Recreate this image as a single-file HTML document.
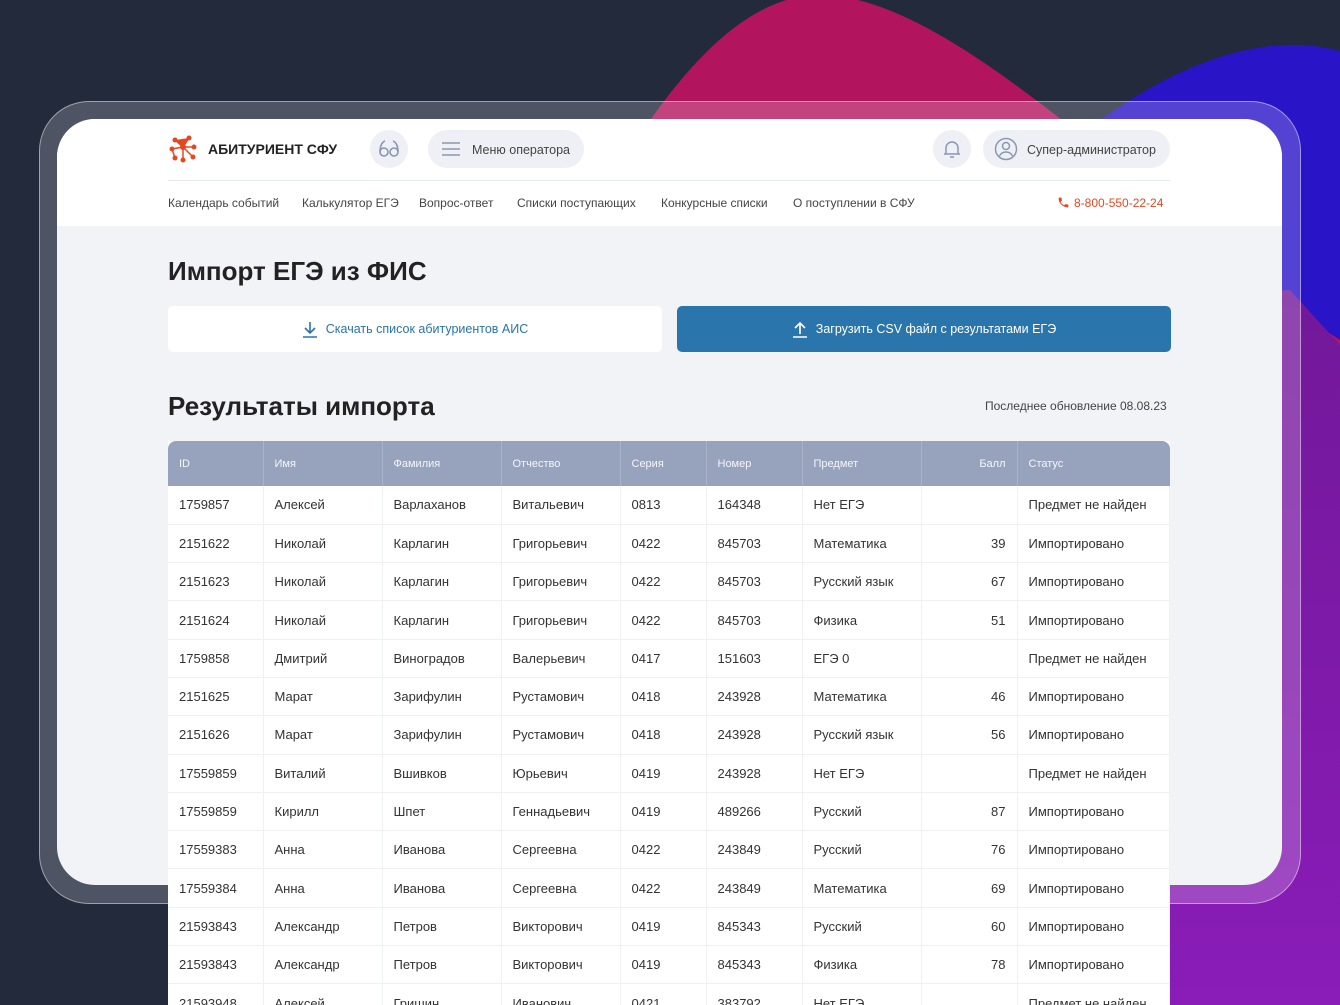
<!DOCTYPE html>
<html style="width:1340px;height:1005px;overflow:hidden"><head><meta charset="utf-8">
<style>
*{margin:0;padding:0;box-sizing:border-box}
body{width:1340px;height:1005px;overflow:hidden;position:relative;background:#222a3c;font-family:"Liberation Sans","Noto Sans CJK SC",sans-serif;color:#333}
.bg{position:absolute;left:0;top:0}
.frame{position:absolute;left:39px;top:101px;width:1262px;height:803px;border-radius:50px;background:rgba(255,255,255,0.2);border:1px solid rgba(255,255,255,0.45)}
.card{position:absolute;left:57px;top:119px;width:1225px;height:766px;border-radius:38px;background:#f2f3f7;overflow:hidden}
.hdr{position:absolute;left:0;top:0;width:1225px;height:107px;background:#fff}
.abs{position:absolute}
.pill{position:absolute;background:#eef0f5;border-radius:20px;height:38px}
.nav{position:absolute;top:77px;font-size:12px;color:#444;white-space:nowrap}
h1{position:absolute;font-size:26px;font-weight:bold;color:#222;white-space:nowrap}
.btn{position:absolute;top:187px;height:46px;width:494px;border-radius:5px;font-size:12.5px;display:flex;align-items:center;justify-content:center;gap:8px}
.wrap{position:absolute;left:168px;top:441px;width:1002px;height:564px;overflow:hidden}
table{width:1002px;border-collapse:collapse;background:#fff;font-size:13px;color:#333}
th{background:#97a3bc;color:#f4f6fa;font-weight:normal;font-size:11px;height:45px;text-align:left;padding-left:11px;border-right:1px solid #a9b3c8}
td{height:38.3px;padding-left:11px;border-bottom:1px solid #eef0f4;border-right:1px solid #eef0f4;white-space:nowrap}
td.r,th.r{text-align:right;padding-right:11px;padding-left:0}
</style></head><body>
<svg class="bg" width="1340" height="1005">
<defs><linearGradient id="pg" x1="0" y1="0" x2="0" y2="1"><stop offset="0" stop-color="#72189a"/><stop offset="1" stop-color="#8a1cb8"/></linearGradient></defs>
<path d="M600 200 C680 60 750 -5 820 -5 C900 -5 1000 70 1100 150 L1340 330 L1340 1005 L1100 1005 Z" fill="#b3145e"/>
<path d="M1050 160 C1130 90 1220 42 1300 45 C1320 46 1340 50 1340 52 L1340 340 L1200 250 Z" fill="#2a14c8"/>
<path d="M1150 300 L1290 290 L1340 345 L1340 1005 L1150 1005 Z" fill="url(#pg)"/>
</svg>
<div class="frame"></div>
<div class="card">
 <div class="hdr">
  <svg class="abs" style="left:112px;top:16px" width="28" height="28" viewBox="0 0 28 28" fill="#e8461e"><circle cx="6" cy="5" r="2.5"/><circle cx="20" cy="3" r="2.5"/><circle cx="25" cy="12" r="2.5"/><circle cx="14" cy="12" r="3"/><circle cx="3" cy="14" r="2.5"/><circle cx="6" cy="23" r="2.5"/><circle cx="14" cy="25" r="2.5"/><circle cx="24" cy="22" r="2.5"/><path d="M6 5L14 12L20 3M14 12L25 12M14 12L3 14M14 12L14 25M14 12L24 22M6 23L3 14" stroke="#e8461e" stroke-width="1.5"/></svg>
  <div class="abs" style="left:151px;top:22px;font-size:14px;font-weight:bold;color:#222">АБИТУРИЕНТ СФУ</div>
  <div class="pill" style="left:313px;top:11px;width:38px"></div>
  <svg class="abs" style="left:321px;top:20px" width="22" height="20" viewBox="0 0 22 20" fill="none" stroke="#8b97b0" stroke-width="1.6"><circle cx="6" cy="13" r="4"/><circle cx="16" cy="13" r="4"/><path d="M2 13C2 7 4 3 7 2M20 13C20 7 18 3 15 2"/></svg>
  <div class="pill" style="left:371px;top:11px;width:156px"></div>
  <svg class="abs" style="left:385px;top:22px" width="18" height="16" stroke="#8b97b0" stroke-width="1.6"><path d="M0 2H18M0 8H18M0 14H18"/></svg>
  <div class="abs" style="left:415px;top:24px;font-size:12.5px;color:#444">Меню оператора</div>
  <div class="pill" style="left:876px;top:11px;width:38px"></div>
  <svg class="abs" style="left:886px;top:20px" width="18" height="20" fill="none" stroke="#8b97b0" stroke-width="1.5"><path d="M3 15V9a6 6 0 0112 0v6M1 15H17M7 18H11"/></svg>
  <div class="pill" style="left:926px;top:11px;width:187px"></div>
  <svg class="abs" style="left:937px;top:18px" width="24" height="24" fill="none" stroke="#8b97b0" stroke-width="1.5"><circle cx="12" cy="12" r="10.5"/><circle cx="12" cy="9" r="3.5"/><path d="M5.5 19c1.5-3 4-4 6.5-4s5 1 6.5 4"/></svg>
  <div class="abs" style="left:970px;top:24px;font-size:12.5px;color:#444">Супер-администратор</div>
  <div class="abs" style="left:111px;top:61px;width:1002px;height:1px;background:#e6e9ef"></div>
  <div class="nav" style="left:111px">Календарь событий</div>
  <div class="nav" style="left:245px">Калькулятор ЕГЭ</div>
  <div class="nav" style="left:362px">Вопрос-ответ</div>
  <div class="nav" style="left:460px">Списки поступающих</div>
  <div class="nav" style="left:604px">Конкурсные списки</div>
  <div class="nav" style="left:736px">О поступлении в СФУ</div>
  <svg class="abs" style="left:1000px;top:77px" width="13" height="13" viewBox="0 0 24 24" fill="#e8461e"><path d="M6.6 10.8c1.4 2.8 3.8 5.1 6.6 6.6l2.2-2.2c.3-.3.7-.4 1-.2 1.1.4 2.3.6 3.6.6.6 0 1 .4 1 1V20c0 .6-.4 1-1 1C10.6 21 3 13.4 3 4c0-.6.4-1 1-1h3.5c.6 0 1 .4 1 1 0 1.3.2 2.5.6 3.6.1.3 0 .7-.2 1z"/></svg>
  <div class="nav" style="left:1017px;color:#e8461e">8-800-550-22-24</div>
 </div>
 <h1 style="left:111px;top:137px">Импорт ЕГЭ из ФИС</h1>
 <div class="btn" style="left:111px;background:#fff;color:#2a73ad">
  <svg width="16" height="17" fill="none" stroke="#2a73ad" stroke-width="1.6"><path d="M8 1V12M3 7L8 12L13 7M1 16H15"/></svg>Скачать список абитуриентов АИС</div>
 <div class="btn" style="left:620px;background:#2a75ac;color:#fff">
  <svg width="16" height="17" fill="none" stroke="#fff" stroke-width="1.6"><path d="M8 13V2M3 7L8 2L13 7M1 16H15"/></svg>Загрузить CSV файл с результатами ЕГЭ</div>
 <h1 style="left:111px;top:272px">Результаты импорта</h1>
 <div class="abs" style="left:928px;top:280px;font-size:12px;color:#444">Последнее обновление 08.08.23</div>
</div>
<div class="wrap">
<table>
<tr><th style="width:95px;border-top-left-radius:8px">ID</th><th style="width:119px">Имя</th><th style="width:119px">Фамилия</th><th style="width:119px">Отчество</th><th style="width:86px">Серия</th><th style="width:96px">Номер</th><th style="width:119px">Предмет</th><th class="r" style="width:96px">Балл</th><th style="border-top-right-radius:8px;border-right:none">Статус</th></tr>
<tr><td>1759857</td><td>Алексей</td><td>Варлаханов</td><td>Витальевич</td><td>0813</td><td>164348</td><td>Нет ЕГЭ</td><td class="r"></td><td>Предмет не найден</td></tr>
<tr><td>2151622</td><td>Николай</td><td>Карлагин</td><td>Григорьевич</td><td>0422</td><td>845703</td><td>Математика</td><td class="r">39</td><td>Импортировано</td></tr>
<tr><td>2151623</td><td>Николай</td><td>Карлагин</td><td>Григорьевич</td><td>0422</td><td>845703</td><td>Русский язык</td><td class="r">67</td><td>Импортировано</td></tr>
<tr><td>2151624</td><td>Николай</td><td>Карлагин</td><td>Григорьевич</td><td>0422</td><td>845703</td><td>Физика</td><td class="r">51</td><td>Импортировано</td></tr>
<tr><td>1759858</td><td>Дмитрий</td><td>Виноградов</td><td>Валерьевич</td><td>0417</td><td>151603</td><td>ЕГЭ 0</td><td class="r"></td><td>Предмет не найден</td></tr>
<tr><td>2151625</td><td>Марат</td><td>Зарифулин</td><td>Рустамович</td><td>0418</td><td>243928</td><td>Математика</td><td class="r">46</td><td>Импортировано</td></tr>
<tr><td>2151626</td><td>Марат</td><td>Зарифулин</td><td>Рустамович</td><td>0418</td><td>243928</td><td>Русский язык</td><td class="r">56</td><td>Импортировано</td></tr>
<tr><td>17559859</td><td>Виталий</td><td>Вшивков</td><td>Юрьевич</td><td>0419</td><td>243928</td><td>Нет ЕГЭ</td><td class="r"></td><td>Предмет не найден</td></tr>
<tr><td>17559859</td><td>Кирилл</td><td>Шпет</td><td>Геннадьевич</td><td>0419</td><td>489266</td><td>Русский</td><td class="r">87</td><td>Импортировано</td></tr>
<tr><td>17559383</td><td>Анна</td><td>Иванова</td><td>Сергеевна</td><td>0422</td><td>243849</td><td>Русский</td><td class="r">76</td><td>Импортировано</td></tr>
<tr><td>17559384</td><td>Анна</td><td>Иванова</td><td>Сергеевна</td><td>0422</td><td>243849</td><td>Математика</td><td class="r">69</td><td>Импортировано</td></tr>
<tr><td>21593843</td><td>Александр</td><td>Петров</td><td>Викторович</td><td>0419</td><td>845343</td><td>Русский</td><td class="r">60</td><td>Импортировано</td></tr>
<tr><td>21593843</td><td>Александр</td><td>Петров</td><td>Викторович</td><td>0419</td><td>845343</td><td>Физика</td><td class="r">78</td><td>Импортировано</td></tr>
<tr><td>21593948</td><td>Алексей</td><td>Гришин</td><td>Иванович</td><td>0421</td><td>383792</td><td>Нет ЕГЭ</td><td class="r"></td><td>Предмет не найден</td></tr>
</table>
</div>
</body></html>
